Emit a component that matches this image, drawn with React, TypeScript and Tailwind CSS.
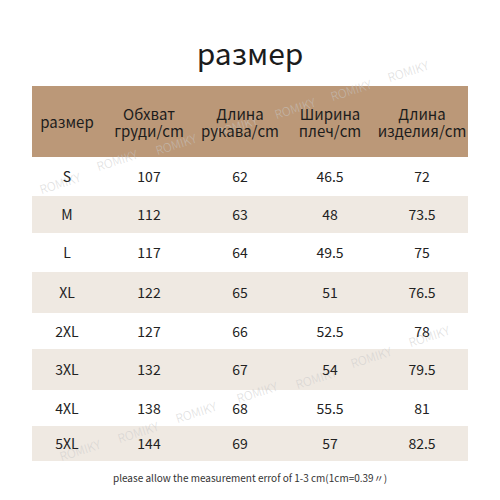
const HEADER_BG = "bg-[#bb9878]";

const HEADS = [
  ["размер"],
  ["Обхват", "груди/cm"],
  ["Длина", "рукава/cm"],
  ["Ширина", "плеч/cm"],
  ["Длина", "изделия/cm"],
];

const ROWS: { cells: string[]; h: number }[] = [
  { cells: ["S", "107", "62", "46.5", "72"], h: 39 },
  { cells: ["M", "112", "63", "48", "73.5"], h: 37 },
  { cells: ["L", "117", "64", "49.5", "75"], h: 39 },
  { cells: ["XL", "122", "65", "51", "76.5"], h: 41 },
  { cells: ["2XL", "127", "66", "52.5", "78"], h: 36 },
  { cells: ["3XL", "132", "67", "54", "79.5"], h: 41 },
  { cells: ["4XL", "138", "68", "55.5", "81"], h: 36 },
  { cells: ["5XL", "144", "69", "57", "82.5"], h: 35 },
];

// watermark centres, two diagonal chains
const MARKS = [
  [408, 71], [351, 90], [295, 108], [237, 126], [176, 144], [117, 160], [60, 183],
  [429, 336], [371, 357], [316, 378], [257, 392], [196, 412], [138, 432], [80, 450],
];

const COLS = "grid grid-cols-[70px_94px_88px_92px_92px]";

export default function App() {
  return (
    <div
      className="relative w-[500px] h-[500px] overflow-hidden bg-white text-[#1c1c1c]"
      style={{ fontFamily: '"Noto Sans CJK SC", "Noto Sans", sans-serif' }}
    >
      <div className="h-[86px] pt-[32px] text-center text-[30px] leading-[40px]">размер</div>

      <div className="mx-[32px]">
        <div className={`${COLS} ${HEADER_BG} h-[71px] items-center text-[15px] leading-[17px]`}>
          {HEADS.map((lines, i) => (
            <div key={i} className="relative z-10 text-center">
              {lines.map((l) => (
                <div key={l}>{l}</div>
              ))}
            </div>
          ))}
        </div>

        {ROWS.map((r, i) => (
          <div
            key={r.cells[0]}
            className={`${COLS} items-center text-[14px] text-[#222] ${i % 2 ? "bg-[#efe9e2]" : "bg-white"}`}
            style={{ height: r.h }}
          >
            {r.cells.map((c, j) => (
              <div key={j} className="relative z-10 text-center">
                {c}
              </div>
            ))}
          </div>
        ))}
      </div>

      <div className="pt-[9px] text-center text-[10px] text-[#333]">
        please allow the measurement errof of 1-3 cm(1cm=0.39〃)
      </div>

      {MARKS.map(([x, y], i) => (
        <span
          key={i}
          className="absolute -translate-x-1/2 -translate-y-1/2 -rotate-[18deg] text-[12px] font-light leading-none text-[rgba(200,200,200,0.6)]"
          style={{ left: x, top: y }}
        >
          ROMIKY
        </span>
      ))}
    </div>
  );
}
